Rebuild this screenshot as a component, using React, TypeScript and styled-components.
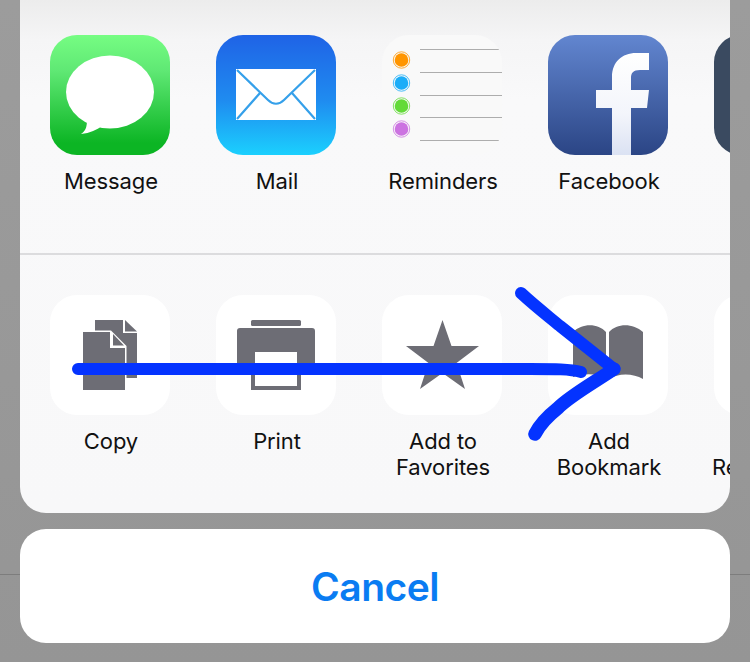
import { ReactNode } from "react";
import styled, { createGlobalStyle } from "styled-components";

const GlobalStyle = createGlobalStyle`
  html, body {
    margin: 0;
    padding: 0;
    background: #989898;
  }
`;

const Stage = styled.div`
  position: relative;
  width: 750px;
  height: 662px;
  overflow: hidden;
  box-sizing: border-box;
  padding: 0 20px;
  display: flex;
  flex-direction: column;
  row-gap: 16px;
  background: linear-gradient(#9c9c9c, #959595);
  font-family: Inter, "Liberation Sans", sans-serif;
  &::before {
    content: "";
    position: absolute;
    left: 0;
    right: 0;
    top: 574px;
    height: 1px;
    background: #7d7d7d;
  }
`;

const Sheet = styled.div`
  position: relative;
  height: 513px;
  flex: none;
  overflow: hidden;
  border-radius: 0 0 26px 26px;
  background: linear-gradient(#ececec 0, #f5f5f6 40px, #f9f9fa 100px, #f8f8f9 100%);
`;

const Row = styled.div<{ $top: number; $height: number }>`
  display: flex;
  box-sizing: border-box;
  height: ${(p) => p.$height}px;
  padding: ${(p) => p.$top}px 0 0 7px;
`;

const Divider = styled.div`
  height: 2px;
  background: #dcdcde;
`;

const Item = styled.div`
  flex: 0 0 166px;
  display: flex;
  flex-direction: column;
  align-items: center;
  row-gap: 13px;
`;

const Tile = styled.div<{ $bg?: string }>`
  width: 120px;
  height: 120px;
  border-radius: 27px;
  overflow: hidden;
  background: ${(p) => p.$bg ?? "#fff"};
  svg {
    display: block;
  }
`;

const Label = styled.div`
  width: 130px;
  padding-left: 2px;
  text-align: center;
  color: #111;
  font-size: 22px;
  line-height: 26px;
  letter-spacing: -0.1px;
`;

const CancelButton = styled.div`
  height: 114px;
  flex: none;
  display: flex;
  align-items: center;
  justify-content: center;
  position: relative;
  border-radius: 26px;
  background: #fff;
  color: #0a7cf2;
  font-size: 39px;
  font-weight: 600;
  letter-spacing: -0.5px;
`;

const Scribble = styled.svg`
  position: absolute;
  left: 0;
  top: 0;
  pointer-events: none;
`;

const GREY = "#6d6d75";
const INK = "#0433ff";

function Icon({ children }: { children: ReactNode }) {
  return (
    <svg width="120" height="120" viewBox="0 0 120 120">
      {children}
    </svg>
  );
}

const messageIcon = (
  <Icon>
    <ellipse cx="60" cy="57" rx="44" ry="36.5" fill="#fff" />
    <path d="M37 82 C37 90 37 95 31 99 C40 98 47 95 53 90 Z" fill="#fff" />
  </Icon>
);

const mailIcon = (
  <Icon>
    <rect x="20" y="34" width="80" height="51" fill="#fff" />
    <path
      d="M21 35 L52 65 C57 70 63 70 68 65 L99 35 M44 58 L21 84 M76 58 L99 84"
      fill="none"
      stroke="#35a0ea"
      strokeWidth="2.2"
    />
  </Icon>
);

const reminderDots = [
  { y: 25, color: "#ff9500" },
  { y: 48, color: "#1badf8" },
  { y: 71, color: "#63da38" },
  { y: 94, color: "#cc73e1" },
];

const remindersIcon = (
  <Icon>
    {reminderDots.map((d) => (
      <g key={d.y}>
        <circle cx="19.5" cy={d.y} r="8.2" fill="none" stroke={d.color} strokeWidth="0.8" />
        <circle cx="19.5" cy={d.y} r="6.8" fill={d.color} />
      </g>
    ))}
    <path
      d="M38 14.5 H117 M38 37.5 H120 M38 60.5 H120 M38 82.5 H120 M38 105.5 H117"
      stroke="#adadad"
      strokeWidth="1"
    />
  </Icon>
);

const facebookIcon = (
  <Icon>
    <defs>
      <linearGradient id="fbF" x1="0" y1="0" x2="0" y2="1">
        <stop offset="0" stopColor="#ffffff" />
        <stop offset="0.6" stopColor="#f3f5fb" />
        <stop offset="1" stopColor="#dbe2f3" />
      </linearGradient>
    </defs>
    <path
      d="M64 120 V73 H48 V55 H64 V42 C64 27 74 18 88 18 H101 V35 H92 C85 35 83 38 83 43 V55 H101 L99 73 H83 V120 Z"
      fill="url(#fbF)"
    />
  </Icon>
);

const copyIcon = (
  <Icon>
    <path d="M45 25 H73 V38 H87 V83 H45 Z" fill={GREY} />
    <path d="M75 25 L87 36.5 H75 Z" fill={GREY} />
    <path d="M33 37 H60 V53 H75 V95 H33 Z" fill={GREY} />
    <path d="M45 35.5 H61 L76.5 51 V85 H75 V53 H60 V37 H45 Z" fill="#fff" />
    <path d="M63 39 L74 50.5 H63 Z" fill={GREY} />
  </Icon>
);

const printIcon = (
  <Icon>
    <rect x="35" y="25" width="50" height="6" rx="1.5" fill={GREY} />
    <path d="M24 33 H96 Q99 33 99 36 V79 H85 V95 H35 V79 H21 V36 Q21 33 24 33 Z" fill={GREY} />
    <rect x="39" y="57" width="42" height="34" fill="#fff" />
  </Icon>
);

const starIcon = (
  <Icon>
    <path d="M60.5 25 L69.5 51 H97 L74.5 68 L83 94 L60.5 78 L38 94 L46.5 68 L24 51 H51.5 Z" fill={GREY} />
  </Icon>
);

const bookIcon = (
  <Icon>
    <path d="M25 37 C34 28 50 28 58 37 V84 C50 78 36 78 25 82 Z" fill={GREY} />
    <path d="M61 37 C69 28 85 28 95 37 V84 C85 78 70 78 61 84 Z" fill={GREY} />
  </Icon>
);

const topItems = [
  { label: "Message", bg: "linear-gradient(#76fd83, #5fe874 30%, #0cb524 90%, #0cb524)", icon: messageIcon },
  { label: "Mail", bg: "linear-gradient(#1f63e6, #1f8cf0 55%, #1bd0fe)", icon: mailIcon },
  { label: "Reminders", bg: "#f9f9f9", icon: remindersIcon },
  { label: "Facebook", bg: "linear-gradient(#6286d0, #2b4585)", icon: facebookIcon },
  { label: "", bg: "#3a4a60", icon: null },
];

const actionItems = [
  { label: "Copy", icon: copyIcon },
  { label: "Print", icon: printIcon },
  { label: "Add to Favorites", icon: starIcon },
  { label: "Add Bookmark", icon: bookIcon },
  { label: "Add to Reading List", icon: null },
];

export default function App() {
  return (
    <>
      <GlobalStyle />
      <Stage>
        <Sheet>
          <Row $top={35} $height={253}>
            {topItems.map((item, i) => (
              <Item key={i}>
                <Tile $bg={item.bg}>{item.icon}</Tile>
                {item.label && <Label>{item.label}</Label>}
              </Item>
            ))}
          </Row>
          <Divider />
          <Row $top={40} $height={258}>
            {actionItems.map((item) => (
              <Item key={item.label}>
                <Tile>{item.icon}</Tile>
                <Label>{item.label}</Label>
              </Item>
            ))}
          </Row>
        </Sheet>
        <CancelButton>Cancel</CancelButton>
        <Scribble width="750" height="662" viewBox="0 0 750 662">
          <path
            d="M78 369 H530 C555 369 570 369 581 372 M521 293 C535 306 548 316 560 326 L614 369"
            fill="none"
            stroke={INK}
            strokeWidth="12"
            strokeLinecap="round"
            strokeLinejoin="round"
          />
          <path
            d="M614 369 C590 385 570 396 558 408 C548 416 540 424 535 434"
            fill="none"
            stroke={INK}
            strokeWidth="13.5"
            strokeLinecap="round"
          />
        </Scribble>
      </Stage>
    </>
  );
}
